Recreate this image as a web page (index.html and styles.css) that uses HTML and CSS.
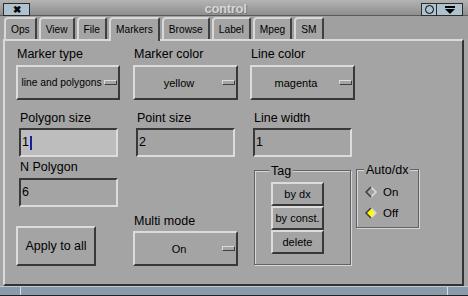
FILE: index.html
```html
<!DOCTYPE html>
<html lang="en">
<head>
  <meta charset="UTF-8">
  <title>control</title>
  <link rel="stylesheet" href="styles.css">
</head>
<body>
  <div class="win">
    <div class="titlebar">
      <div class="tb-btn close">&#10006;</div>
      <div class="title">control</div>
      <div class="tb-btn circle"><span class="ring"></span></div>
      <div class="tb-btn shade">
        <svg width="12" height="8" viewBox="0 0 12 8"><rect x="1" y="0" width="10" height="2" fill="#000"/><polygon points="1,3 11,3 6,8" fill="#000"/></svg>
      </div>
    </div>

    <div class="tabs">
      <div class="tab">Ops</div>
      <div class="tab">View</div>
      <div class="tab">File</div>
      <div class="tab active">Markers</div>
      <div class="tab">Browse</div>
      <div class="tab">Label</div>
      <div class="tab">Mpeg</div>
      <div class="tab">SM</div>
    </div>

    <div class="panel">
      <div class="row row1">
        <div class="field">
          <label>Marker type</label>
          <div class="optmenu small-text"><span class="opt-text">line and polygons</span><span class="ind"></span></div>
        </div>
        <div class="field">
          <label>Marker color</label>
          <div class="optmenu"><span class="opt-text">yellow</span><span class="ind"></span></div>
        </div>
        <div class="field">
          <label>Line color</label>
          <div class="optmenu"><span class="opt-text">magenta</span><span class="ind"></span></div>
        </div>
      </div>

      <div class="row row2">
        <div class="field inset">
          <label>Polygon size</label>
          <div class="entry focused">1<span class="cursor"></span></div>
        </div>
        <div class="field inset">
          <label>Point size</label>
          <div class="entry">2</div>
        </div>
        <div class="field inset">
          <label>Line width</label>
          <div class="entry">1</div>
        </div>
      </div>

      <div class="row row3">
        <div class="col-left">
          <div class="field inset">
            <label>N Polygon</label>
            <div class="entry">6</div>
          </div>
          <div class="button apply">Apply to all</div>
        </div>
        <div class="col-mid">
          <div class="field">
            <label class="multi-label">Multi mode</label>
            <div class="optmenu"><span class="opt-text">On</span><span class="ind"></span></div>
          </div>
        </div>
        <div class="col-right">
          <div class="frame tag">
            <span class="frame-title">Tag</span>
            <div class="button tagbtn">by dx</div>
            <div class="button tagbtn">by const.</div>
            <div class="button tagbtn">delete</div>
          </div>
          <div class="frame auto">
            <span class="frame-title">Auto/dx</span>
            <div class="radio">
              <svg width="12" height="12" viewBox="0 0 12 12">
                <polyline points="6,11 11,6 6,1" fill="none" stroke="#dcdcdc" stroke-width="1.5"/>
                <polyline points="6,11 1,6 6,1" fill="none" stroke="#3a3a3a" stroke-width="1.5"/>
              </svg>
              <span>On</span>
            </div>
            <div class="radio">
              <svg width="12" height="12" viewBox="0 0 12 12">
                <polygon points="6,1 11,6 6,11 1,6" fill="#ffff00"/>
                <polyline points="6,11 11,6 6,1" fill="none" stroke="#d8d8d8" stroke-width="1.5"/>
                <polyline points="6,11 1,6 6,1" fill="none" stroke="#3a3a3a" stroke-width="1.5"/>
              </svg>
              <span>Off</span>
            </div>
          </div>
        </div>
      </div>
    </div>

    <div class="statusbar">
      <span class="seg first"></span>
      <span class="seg mid"></span>
      <span class="seg last"></span>
    </div>
  </div>
</body>
</html>
```

FILE: styles.css
```css
body {
  margin: 0;
  background: #1c1c1c;
  font-family: "Liberation Sans", Arial, sans-serif;
  color: #000;
  overflow: hidden;
}
.win {
  width: 468px;
  height: 296px;
  display: flex;
  flex-direction: column;
  background: #a4a4a4;
}

/* title bar */
.titlebar {
  height: 16px;
  display: flex;
  align-items: flex-start;
  padding: 3px 5px 0 3px;
  box-sizing: border-box;
  background: linear-gradient(#b4b4b4, #8e8e8e);
  border-bottom: 1px solid #5a5a5a;
  flex-shrink: 0;
}
.tb-btn {
  height: 11px;
  background: #aec2d0;
  border: 1px solid #2c2c2c;
  display: flex;
  align-items: center;
  justify-content: center;
}
.close {
  width: 25px;
  font-size: 10px;
  font-weight: bold;
  line-height: 11px;
}
.title {
  flex: 1;
  text-align: center;
  font-size: 13px;
  font-weight: bold;
  line-height: 12px;
  color: #d6d6d6;
  text-shadow: 1px 1px 0 #7a7a7a;
  letter-spacing: -0.3px;
}
.circle {
  width: 14px;
}
.ring {
  width: 7px;
  height: 7px;
  border: 1px solid #000;
  border-radius: 50%;
}
.shade {
  width: 25px;
  border-left: none;
}

/* tabs */
.tabs {
  height: 23px;
  display: flex;
  align-items: flex-end;
  gap: 2px;
  padding-left: 4px;
  flex-shrink: 0;
  background: #a0a0a0;
}
.tab {
  height: 20px;
  padding: 0 5px;
  font-size: 10.2px;
  line-height: 21px;
  border-top: 2px solid #d8d8d8;
  border-left: 2px solid #d8d8d8;
  border-right: 2px solid #404040;
  border-top-left-radius: 4px;
  border-top-right-radius: 2px;
  background: #a4a4a4;
}
.tab.active {
  height: 22px;
  margin-bottom: -2px;
  position: relative;
  z-index: 1;
}

/* main panel */
.panel {
  flex: 1;
  margin: 0 4px 0 3px;
  border-top: 2px solid #dadada;
  border-left: 2px solid #dadada;
  border-right: 2px solid #333;
  border-bottom: 2px solid #333;
  padding: 6px 0 0 11px;
  font-size: 12.5px;
}
.row {
  display: grid;
  grid-template-columns: 104px 104px auto;
  column-gap: 13px;
}
.row2 {
  margin-top: 11px;
}
.row3 {
  margin-top: 3px;
}
.field {
  display: flex;
  flex-direction: column;
}
.field.inset {
  padding-left: 3px;
}
.field label {
  line-height: 14px;
  margin: 0 0 4px 1px;
}
.row2 .field label {
  margin-bottom: 3px;
}

.optmenu {
  height: 35px;
  width: 105px;
  box-sizing: border-box;
  display: flex;
  align-items: center;
  padding: 0 1px 0 3px;
  font-size: 11px;
  border-top: 2px solid #dcdcdc;
  border-left: 2px solid #dcdcdc;
  border-right: 2px solid #383838;
  border-bottom: 2px solid #383838;
}
.row1 .field:first-child .optmenu {
  width: 104px;
}
.optmenu.small-text {
  font-size: 10.3px;
}
.opt-text {
  flex: 1;
  text-align: center;
  white-space: nowrap;
}
.ind {
  width: 13px;
  height: 5px;
  box-sizing: border-box;
  margin-left: 2px;
  border-top: 1px solid #dcdcdc;
  border-left: 1px solid #dcdcdc;
  border-right: 1px solid #404040;
  border-bottom: 1px solid #404040;
}

.entry {
  width: 99px;
  height: 29px;
  box-sizing: border-box;
  padding-left: 1px;
  line-height: 25px;
  border-top: 2px solid #383838;
  border-left: 2px solid #383838;
  border-right: 2px solid #dcdcdc;
  border-bottom: 2px solid #dcdcdc;
  display: flex;
  align-items: center;
}
.entry.focused {
  background: #bdbdbd;
}
.cursor {
  width: 2px;
  height: 14px;
  margin-left: 1px;
  background: #1c1ca0;
}

.button {
  box-sizing: border-box;
  display: flex;
  align-items: center;
  justify-content: center;
  border-top: 2px solid #dcdcdc;
  border-left: 2px solid #dcdcdc;
  border-right: 2px solid #383838;
  border-bottom: 2px solid #383838;
}
.apply {
  width: 80px;
  height: 40px;
  margin-top: 19px;
}
.col-left {
  display: flex;
  flex-direction: column;
}
.col-mid {
  display: flex;
  flex-direction: column;
  justify-content: flex-end;
}
.multi-label {
  margin-bottom: 3px !important;
}
.col-right {
  display: flex;
  align-items: flex-start;
}

/* grooved frames with a title sitting on the top edge */
.frame {
  position: relative;
  box-sizing: border-box;
  border: 1px solid #626262;
  box-shadow: inset 1px 1px 0 #d6d6d6, 1px 1px 0 #d6d6d6;
}
.frame-title {
  position: absolute;
  top: -7px;
  padding: 0 2px;
  line-height: 14px;
  background: #a4a4a4;
  white-space: nowrap;
}
.tag {
  margin: 10px 0 0 4px;
  width: 97px;
  height: 95px;
  padding: 11px 0 0 16px;
}
.tag .frame-title {
  left: 14px;
}
.tagbtn {
  width: 53px;
  height: 24px;
  font-size: 11px;
}
.auto {
  margin: 9px 0 0 5px;
  width: 63px;
  height: 59px;
  padding: 11px 0 0 8px;
}
.auto .frame-title {
  left: 7px;
}
.radio {
  height: 21px;
  display: flex;
  align-items: center;
  gap: 6px;
  font-size: 11.5px;
}

/* bottom strip */
.statusbar {
  height: 10px;
  flex-shrink: 0;
  display: flex;
  border-top: 1px solid #c8c8c8;
  border-bottom: 1px solid #222;
  box-sizing: border-box;
  background: #8a9cab;
}
.seg {
  border-right: 1px solid #d4dde4;
}
.seg.first {
  width: 20px;
}
.seg.mid {
  flex: 1;
}
.seg.last {
  width: 20px;
  border-right: none;
}
```
